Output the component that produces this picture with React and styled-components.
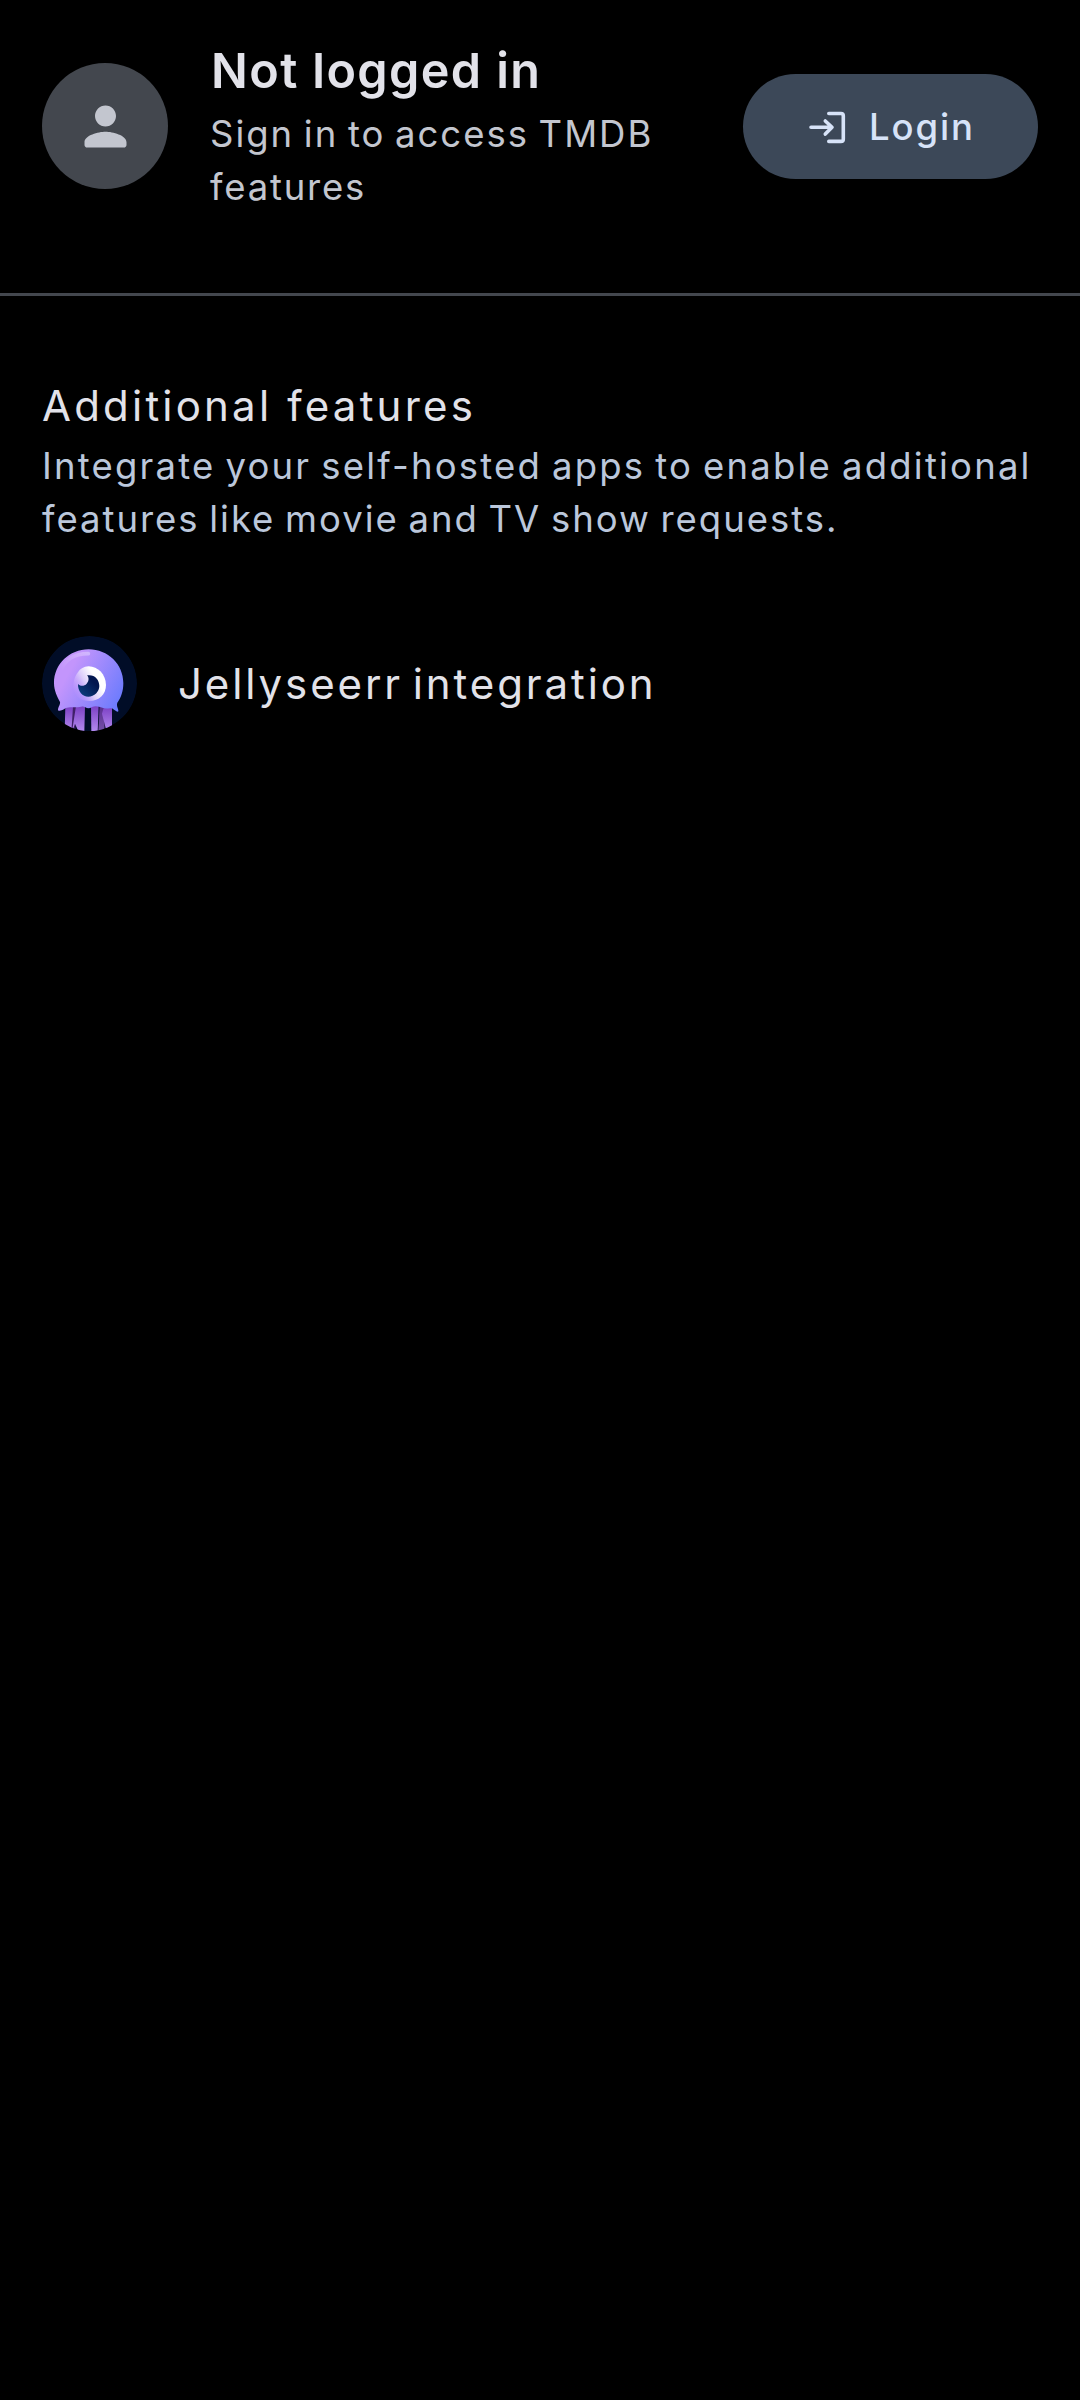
import React from "react";
import styled, { createGlobalStyle } from "styled-components";

const GlobalStyle = createGlobalStyle`
  * { box-sizing: border-box; }
  body { margin: 0; background: #000; }
`;

const Screen = styled.main`
  display: flex;
  flex-direction: column;
  width: 1080px;
  height: 2400px;
  background: #000;
  font-family: Inter, "Liberation Sans", sans-serif;
  color: #e2e2e9;
`;

const Account = styled.header`
  display: flex;
  align-items: center;
  gap: 42px;
  height: 293px;
  padding: 0 42px 41px;
  flex: none;
`;

const Avatar = styled.div`
  display: grid;
  place-items: center;
  flex: none;
  width: 126px;
  height: 126px;
  border-radius: 50%;
  background: #43474e;
  color: #c3c6cf;
`;

const AccountText = styled.div`
  flex: 1;
  min-width: 0;
  padding-bottom: 4px;
`;

const Name = styled.h1`
  margin: 0;
  padding: 0 0 1px 1px;
  font-size: 48.5px;
  line-height: 73.5px;
  font-weight: 600;
  letter-spacing: 1.4px;
  white-space: nowrap;
`;

const Body = styled.p`
  margin: 0;
  font-size: 36.5px;
  line-height: 53px;
  color: ${(p) => p.$color};
`;

const Line = styled.span`
  display: block;
  letter-spacing: ${(p) => p.$tracking}px;
  word-spacing: -2.5px;
  white-space: nowrap;
`;

const LoginButton = styled.button`
  display: flex;
  align-items: center;
  flex: none;
  width: 295px;
  height: 105px;
  padding: 1px 0 0 63px;
  gap: 21px;
  border: 0;
  border-radius: 53px;
  background: #3c4858;
  color: #d7e3f8;
  font: 500 36.5px/52px Inter, "Liberation Sans", sans-serif;
  letter-spacing: 1.9px;
`;

const Divider = styled.hr`
  flex: none;
  width: 100%;
  height: 2.6px;
  margin: 0;
  border: 0;
  background: #43474e;
`;

const Section = styled.section`
  padding: 79px 42px 0;
`;

const Title = styled.h2`
  margin: 0;
  font-size: 42px;
  line-height: 62px;
  font-weight: 400;
  letter-spacing: ${(p) => p.$tracking}px;
  word-spacing: ${(p) => p.$wordGap || 0}px;
  white-space: nowrap;
`;

const Description = styled.div`
  padding-top: 3px;
`;

const Integration = styled.div`
  display: flex;
  align-items: center;
  gap: 41px;
  margin-top: 90px;

  ${Title} {
    padding-top: 2px;
  }
`;

function PersonIcon() {
  return (
    <svg width="63" height="63" viewBox="0 0 24 24" fill="currentColor">
      <path d="M12 12c2.21 0 4-1.79 4-4s-1.79-4-4-4-4 1.79-4 4 1.79 4 4 4zm0 2c-2.67 0-8 1.34-8 4v1c0 .55.45 1 1 1h14c.55 0 1-.45 1-1v-1c0-2.66-5.33-4-8-4z" />
    </svg>
  );
}

function LoginIcon() {
  return (
    <svg width="42" height="42" viewBox="0 0 42 42" fill="none" stroke="currentColor" strokeWidth="3.6" strokeLinecap="round" strokeLinejoin="round">
      <path d="M5 21.3H26M19.3 15L26 21.3L19.3 28.1" />
      <path d="M22.8 7.5H35Q37.3 7.5 37.3 9.8V33.3Q37.3 35.4 35 35.4H22.8" />
    </svg>
  );
}

function JellyLogo() {
  return (
    <svg width="95" height="95" viewBox="36 47 285 285">
      <defs>
        <linearGradient id="head" gradientUnits="userSpaceOnUse" x1="120" y1="150" x2="275" y2="235">
          <stop offset="0" stopColor="#c395fc" />
          <stop offset="1" stopColor="#6c7bfd" />
        </linearGradient>
        <linearGradient id="eye" gradientUnits="userSpaceOnUse" x1="132" y1="215" x2="215" y2="165">
          <stop offset="0" stopColor="#c395fc" stopOpacity="0.1" />
          <stop offset="0.45" stopColor="#dccdfb" />
          <stop offset="0.8" stopColor="#ffffff" />
        </linearGradient>
        <linearGradient id="pupil" x1="0" y1="1" x2="1" y2="0">
          <stop offset="0" stopColor="#0b4384" />
          <stop offset="0.7" stopColor="#02164f" />
        </linearGradient>
        <linearGradient id="leg" x1="0" y1="0" x2="0" y2="1">
          <stop offset="0" stopColor="#7b3fc4" />
          <stop offset="1" stopColor="#b58cf0" />
        </linearGradient>
        <linearGradient id="shine" gradientUnits="userSpaceOnUse" x1="95" y1="150" x2="180" y2="98">
          <stop offset="0" stopColor="#fff" stopOpacity="0" />
          <stop offset="1" stopColor="#fff" stopOpacity="0.35" />
        </linearGradient>
        <clipPath id="disc">
          <circle cx="178.5" cy="189.5" r="142.5" />
        </clipPath>
      </defs>
      <g clipPath="url(#disc)">
        <circle cx="178.5" cy="189.5" r="142.5" fill="#010d27" />
        <path d="M122 258H138L136 335H121ZM208 258H226L223 335H205Z" fill="#402069" />
        <g fill="url(#leg)">
          <path d="M106 258H129L124 335H104Z" />
          <path d="M138 256L165 258L163 335H146L135 310L126 335Z" />
          <path d="M183 256H206L203 335H184Z" />
          <path d="M222 258H246V335H230L216 280Z" />
          <path d="M210 258H220L224 335H205Z" opacity="0.45" />
        </g>
        <path d="M176 87C118 87 72 132 72 188C72 212 82 229 90 245C92 251 83 263 84 269C86 275 99 269 106 264C120 258 136 263 149 260Q159 257 166 261Q176 267 186 260Q196 255 210 260C226 266 238 264 246 264C252 268 262 277 265 273C267 268 258 258 262 247C273 232 280 213 280 188C280 132 234 87 176 87Z" fill="url(#head)" />
        <path d="M91 153C104 119 134 100 175 100" fill="none" stroke="url(#shine)" strokeWidth="11" strokeLinecap="round" />
        <path d="M176 138C204 139 227 161 228 194C228 222 207 242 178 242C150 242 132 225 130 202C128 174 146 138 176 138Z" fill="url(#eye)" />
        <path d="M171 165C193 161 208 177 208 197C208 214 193 229 175 229C158 229 143 213 144 190C149 198 163 198 170 190C178 182 177 171 171 165Z" fill="url(#pupil)" />
      </g>
    </svg>
  );
}

export default function App() {
  return (
    <Screen>
      <GlobalStyle />
      <Account>
        <Avatar><PersonIcon /></Avatar>
        <AccountText>
          <Name>Not logged in</Name>
          <Body $color="#c3c6cf">
            <Line $tracking={1.97}>Sign in to access TMDB</Line>
            <Line $tracking={1.8}>features</Line>
          </Body>
        </AccountText>
        <LoginButton><LoginIcon /><span>Login</span></LoginButton>
      </Account>
      <Divider />
      <Section>
        <Title $tracking={3.2}>Additional features</Title>
        <Description>
          <Body $color="#bbc7db">
            <Line $tracking={2.2}>Integrate your self-hosted apps to enable additional</Line>
            <Line $tracking={1.97}>features like movie and TV show requests.</Line>
          </Body>
        </Description>
        <Integration>
          <JellyLogo />
          <Title $tracking={2.9} $wordGap={-5}>Jellyseerr integration</Title>
        </Integration>
      </Section>
    </Screen>
  );
}
